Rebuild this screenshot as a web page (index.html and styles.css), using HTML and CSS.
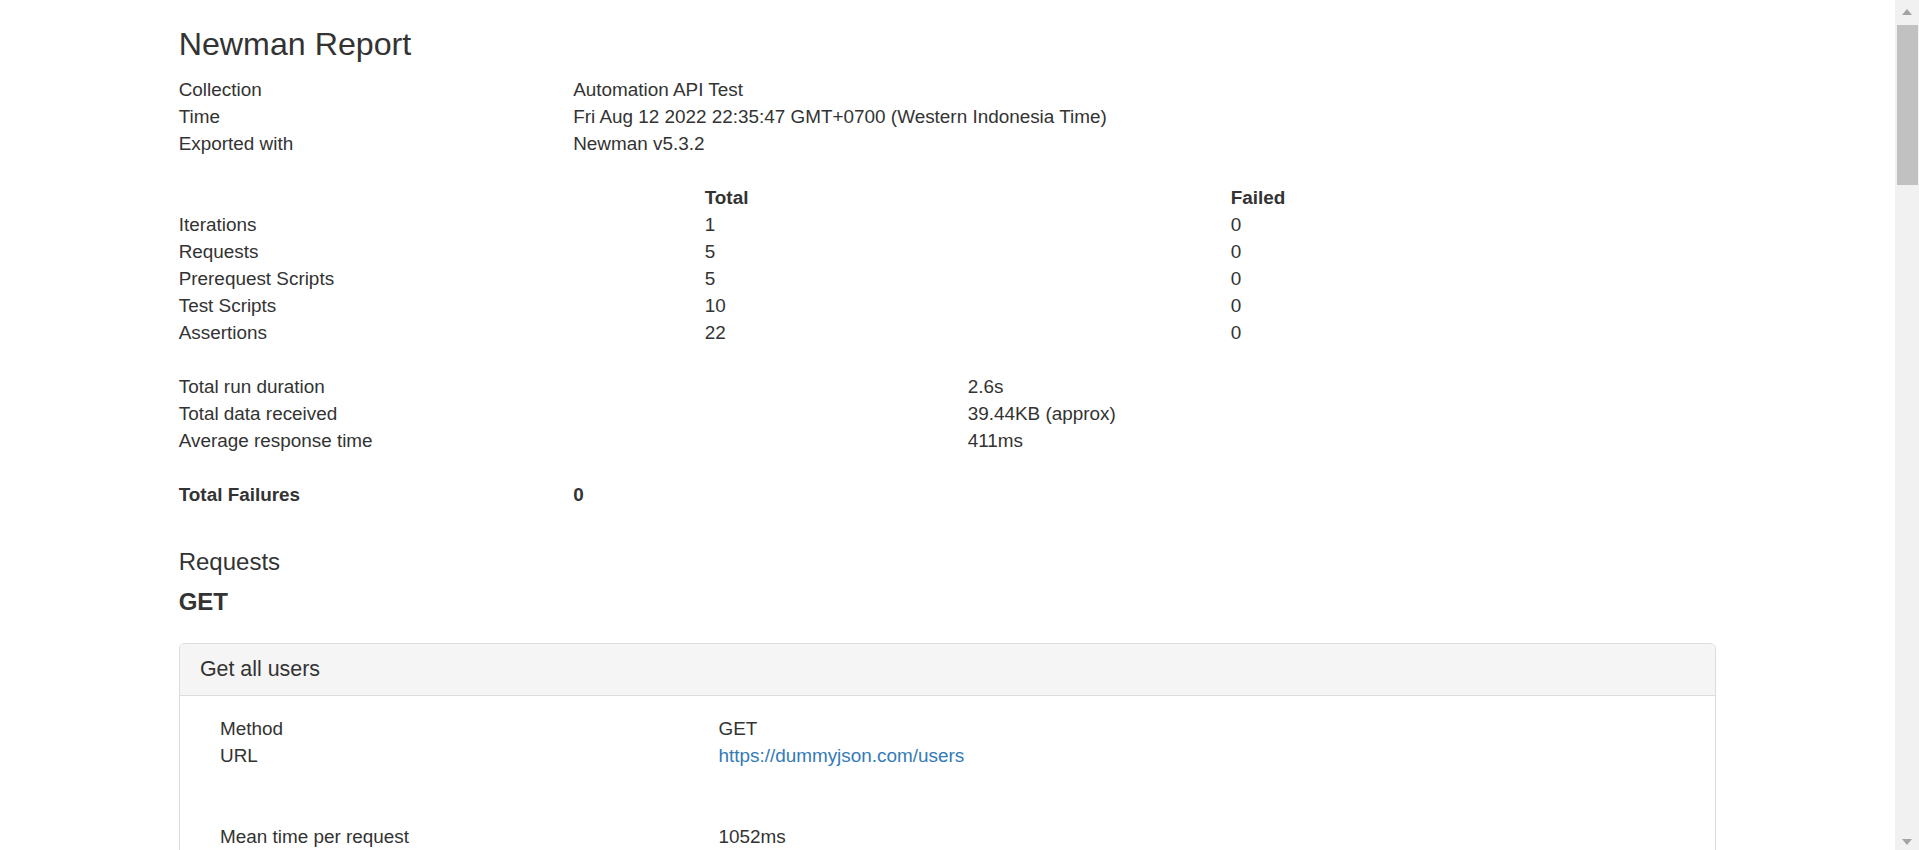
FILE: index.html
```html
<!DOCTYPE html>
<html lang="en">
<head>
<meta charset="utf-8">
<title>Newman Report</title>
<link rel="stylesheet" href="styles.css">
</head>
<body>
<div class="viewport">
  <div class="page">
    <div class="container">
      <h3 class="title">Newman Report</h3>

      <div class="row"><div class="col c3">Collection</div><div class="col c9">Automation API Test</div></div>
      <div class="row"><div class="col c3">Time</div><div class="col c9">Fri Aug 12 2022 22:35:47 GMT+0700 (Western Indonesia Time)</div></div>
      <div class="row"><div class="col c3">Exported with</div><div class="col c9">Newman v5.3.2</div></div>

      <div class="gap"></div>

      <div class="row"><div class="col c4"></div><div class="col c4"><strong>Total</strong></div><div class="col c4"><strong>Failed</strong></div></div>
      <div class="row"><div class="col c4">Iterations</div><div class="col c4">1</div><div class="col c4">0</div></div>
      <div class="row"><div class="col c4">Requests</div><div class="col c4">5</div><div class="col c4">0</div></div>
      <div class="row"><div class="col c4">Prerequest Scripts</div><div class="col c4">5</div><div class="col c4">0</div></div>
      <div class="row"><div class="col c4">Test Scripts</div><div class="col c4">10</div><div class="col c4">0</div></div>
      <div class="row"><div class="col c4">Assertions</div><div class="col c4">22</div><div class="col c4">0</div></div>

      <div class="gap"></div>

      <div class="row"><div class="col c6">Total run duration</div><div class="col c6">2.6s</div></div>
      <div class="row"><div class="col c6">Total data received</div><div class="col c6">39.44KB (approx)</div></div>
      <div class="row"><div class="col c6">Average response time</div><div class="col c6">411ms</div></div>

      <div class="gap"></div>

      <div class="row"><div class="col c3"><strong>Total Failures</strong></div><div class="col c9"><strong>0</strong></div></div>

      <div class="gap"></div>

      <h4 class="section">Requests</h4>
      <h4 class="section method"><strong>GET</strong></h4>

      <div class="panel">
        <div class="panel-heading">
          <h4 class="panel-title">Get all users</h4>
        </div>
        <div class="panel-body">
          <div class="prow"><div class="pcol pc4">Method</div><div class="pcol pc8">GET</div></div>
          <div class="prow"><div class="pcol pc4">URL</div><div class="pcol pc8"><a class="link" href="#">https://dummyjson.com/users</a></div></div>
          <div class="gap"></div>
          <div class="gap"></div>
          <div class="prow"><div class="pcol pc4">Mean time per request</div><div class="pcol pc8">1052ms</div></div>
          <div class="prow"><div class="pcol pc4">Mean size per request</div><div class="pcol pc8">5.27KB</div></div>
          <div class="gap"></div>
          <div class="prow"><div class="pcol pc4">Total passed tests</div><div class="pcol pc8">6</div></div>
          <div class="prow"><div class="pcol pc4">Total failed tests</div><div class="pcol pc8">0</div></div>
        </div>
      </div>
    </div>
  </div>

  <div class="scrollbar">
    <div class="sb-button"><span class="tri tri-up"></span></div>
    <div class="sb-track"><div class="sb-thumb"></div></div>
    <div class="sb-button"><span class="tri tri-down"></span></div>
  </div>
</div>
</body>
</html>
```

FILE: styles.css
```css
html, body {
  margin: 0;
  padding: 0;
  height: 100%;
  overflow: hidden;
  background: #ffffff;
}

body {
  font-family: "Liberation Sans", Arial, Helvetica, sans-serif;
  font-size: 18.9px;
  line-height: 26.98px;
  color: #333333;
}

.viewport {
  display: flex;
  height: 850px;
}

.page {
  flex: 1 1 auto;
  min-width: 0;
  overflow: hidden;
}

.container {
  width: 1578px;
  margin: 0 auto;
  padding: 1px 20.2px 0;
  box-sizing: border-box;
}

.title {
  font-size: 32.2px;
  font-weight: normal;
  line-height: 35.6px;
  margin: 26px 0 14.5px;
}

.row {
  display: flex;
  margin: 0 -20.2px;
}

.col {
  flex: 0 0 auto;
  box-sizing: border-box;
  padding: 0 20.2px;
  min-height: 26.98px;
}

.c3 { width: 25%; }
.c4 { width: 33.3333%; }
.c6 { width: 50%; }
.c9 { width: 75%; }

strong { font-weight: bold; }

.gap {
  height: 26.98px;
}

.section {
  font-size: 24px;
  font-weight: normal;
  line-height: 26.7px;
  margin: 13.49px 0;
}

.method {
  margin-bottom: 27.1px;
}

.panel {
  border: 1px solid #dddddd;
  border-radius: 5.4px;
  box-shadow: 0 1px 1px rgba(0, 0, 0, 0.05);
  background: #ffffff;
}

.panel-heading {
  background: #f5f5f5;
  border-bottom: 1px solid #dddddd;
  border-radius: 4.4px 4.4px 0 0;
  padding: 13.49px 20.2px;
}

.panel-title {
  margin: 0;
  font-size: 21.4px;
  font-weight: normal;
  line-height: 23.74px;
  color: #333333;
}

.panel-body {
  padding: 20.2px;
}

.prow {
  display: flex;
}

.pcol {
  flex: 0 0 auto;
  box-sizing: border-box;
  padding: 0 20.2px;
}

.pc4 { width: 33.3333%; }
.pc8 { width: 66.6667%; }

.link {
  color: #337ab7;
  text-decoration: none;
}

/* fake browser scrollbar */
.scrollbar {
  flex: 0 0 24px;
  width: 24px;
  height: 850px;
  background: #f1f1f1;
  display: flex;
  flex-direction: column;
}

.sb-button {
  height: 23px;
  display: flex;
  align-items: center;
  justify-content: center;
  flex: 0 0 auto;
}

.sb-track {
  flex: 1 1 auto;
  padding: 2px 1px 0 2px;
}

.sb-thumb {
  width: 21px;
  height: 160px;
  background: #c1c1c1;
}

.tri {
  width: 0;
  height: 0;
  border-left: 5.5px solid transparent;
  border-right: 5.5px solid transparent;
}

.tri-up {
  border-bottom: 6px solid #a3a3a3;
}

.tri-down {
  border-top: 6px solid #a3a3a3;
  margin-top: 6px;
}
```
